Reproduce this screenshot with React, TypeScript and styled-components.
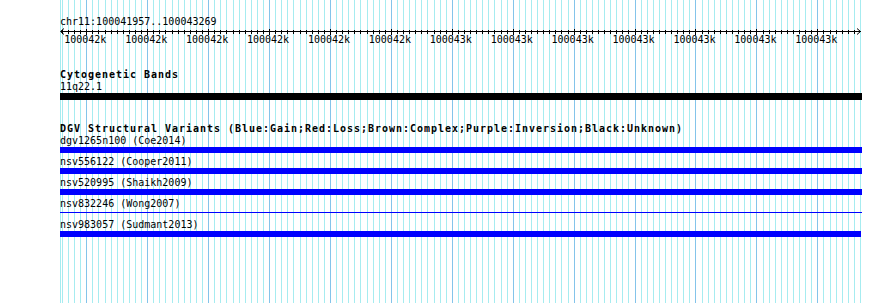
import React from "react";
import styled, { createGlobalStyle } from "styled-components";

const GlobalStyle = createGlobalStyle`
  html, body { margin: 0; padding: 0; background: #ffffff; }
  body {
    font-family: "DejaVu Sans Mono", "Liberation Mono", monospace;
    font-size: 10px;
    color: #000;
  }
`;

const VIEW_LEFT = 60;
const VIEW_WIDTH = 802;
const START = 100041957;
const PX_PER_BP = 0.6092;
const ORIGIN = 60.1;

const bpToX = (bp: number) => ORIGIN + (bp - START) * PX_PER_BP;

const Page = styled.div`
  position: relative;
  width: 890px;
  height: 303px;
  overflow: hidden;
  background: #ffffff;
`;

const GridLayer = styled.svg`
  position: absolute;
  left: 0;
  top: 0;
  z-index: 0;
`;

const View = styled.div`
  position: relative;
  z-index: 1;
  margin-left: ${VIEW_LEFT}px;
  width: ${VIEW_WIDTH}px;
  padding-top: 16px;
  display: flex;
  flex-direction: column;
`;

const LocationLabel = styled.div`
  line-height: 12px;
  height: 12px;
  white-space: nowrap;
`;

const RulerSvg = styled.svg`
  display: block;
  overflow: visible;
`;

const Track = styled.section<{ $top: number }>`
  display: flex;
  flex-direction: column;
  margin-top: ${(p) => p.$top}px;
`;

const TrackTitle = styled.div`
  font-weight: bold;
  letter-spacing: 0.98px;
  line-height: 12px;
  height: 12px;
  white-space: nowrap;
`;

const FeatureRow = styled.div<{ $gap: number }>`
  display: flex;
  flex-direction: column;
  padding-top: ${(p) => p.$gap}px;
`;

const FeatureLabel = styled.div`
  line-height: 12px;
  height: 12px;
  white-space: nowrap;
`;

const FeatureBox = styled.div<{ $color: string; $height: number; $width: number }>`
  height: ${(p) => p.$height}px;
  width: ${(p) => p.$width}px;
  background: ${(p) => p.$color};
`;

const FeatureLine = styled.div<{ $color: string; $width: number }>`
  height: 1px;
  margin: 2px 0 3px;
  width: ${(p) => p.$width}px;
  background: ${(p) => p.$color};
`;

const Grid: React.FC = () => {
  const lines: React.ReactNode[] = [];
  lines.push(<rect key="edge" x={60} y={0} width={1} height={303} fill="#a6ecf0" />);
  for (let bp = 100041960; bp <= 100043270; bp += 10) {
    const x = Math.round(bpToX(bp));
    const major = bp % 100 === 0;
    lines.push(
      <rect
        key={bp}
        x={x}
        y={0}
        width={1}
        height={303}
        fill={major ? "#84c4ea" : "#a6ecf0"}
      />
    );
  }
  return (
    <GridLayer width={890} height={303} shapeRendering="crispEdges">
      {lines}
    </GridLayer>
  );
};

const Ruler: React.FC = () => {
  const ticks: React.ReactNode[] = [];
  const labels: React.ReactNode[] = [];
  for (let bp = 100041960; bp <= 100043260; bp += 10) {
    const x = Math.round(bpToX(bp)) - VIEW_LEFT + 0.5;
    const major = bp % 100 === 0;
    ticks.push(
      <line
        key={bp}
        x1={x}
        x2={x}
        y1={major ? 0.5 : 1.5}
        y2={major ? 7 : 6}
        stroke="#000"
        strokeWidth={1}
      />
    );
    if (major) {
      labels.push(
        <text
          key={`l${bp}`}
          x={bpToX(bp) - VIEW_LEFT - 1}
          y={15}
          textAnchor="middle"
          fontFamily='"DejaVu Sans Mono", "Liberation Mono", monospace'
          fontSize={10}
          fill="#000"
        >
          {`${Math.ceil(bp / 1000 - 0.5)}k`}
        </text>
      );
    }
  }
  return (
    <RulerSvg width={VIEW_WIDTH} height={18}>
      <line x1={0.5} x2={800.5} y1={3.5} y2={3.5} stroke="#000" strokeWidth={1} shapeRendering="crispEdges" />
      <polyline points="4,0.5 0.5,3.5 4,6.5" fill="none" stroke="#000" strokeWidth={1} />
      <polyline points="797,0.5 800.5,3.5 797,6.5" fill="none" stroke="#000" strokeWidth={1} />
      <g shapeRendering="crispEdges">{ticks}</g>
      {labels}
    </RulerSvg>
  );
};

type Variant = { name: string; kind: "box" | "line"; width: number };

const variants: Variant[] = [
  { name: "dgv1265n100 (Coe2014)", kind: "box", width: 802 },
  { name: "nsv556122 (Cooper2011)", kind: "box", width: 802 },
  { name: "nsv520995 (Shaikh2009)", kind: "box", width: 802 },
  { name: "nsv832246 (Wong2007)", kind: "line", width: 802 },
  { name: "nsv983057 (Sudmant2013)", kind: "box", width: 801 },
];

export default function App() {
  return (
    <>
      <GlobalStyle />
      <Page>
        <Grid />
        <View>
          <LocationLabel>chr11:100041957..100043269</LocationLabel>
          <Ruler />
          <Track $top={23}>
            <TrackTitle>Cytogenetic Bands</TrackTitle>
            <FeatureRow $gap={0}>
              <FeatureLabel>11q22.1</FeatureLabel>
              <FeatureBox $color="#000000" $height={7} $width={802} />
            </FeatureRow>
          </Track>
          <Track $top={23}>
            <TrackTitle>
              DGV Structural Variants (Blue:Gain;Red:Loss;Brown:Complex;Purple:Inversion;Black:Unknown)
            </TrackTitle>
            {variants.map((v, i) => (
              <FeatureRow key={v.name} $gap={i === 0 ? 0 : 3}>
                <FeatureLabel>{v.name}</FeatureLabel>
                {v.kind === "box" ? (
                  <FeatureBox $color="#0000ff" $height={6} $width={v.width} />
                ) : (
                  <FeatureLine $color="#0000ff" $width={v.width} />
                )}
              </FeatureRow>
            ))}
          </Track>
        </View>
      </Page>
    </>
  );
}
